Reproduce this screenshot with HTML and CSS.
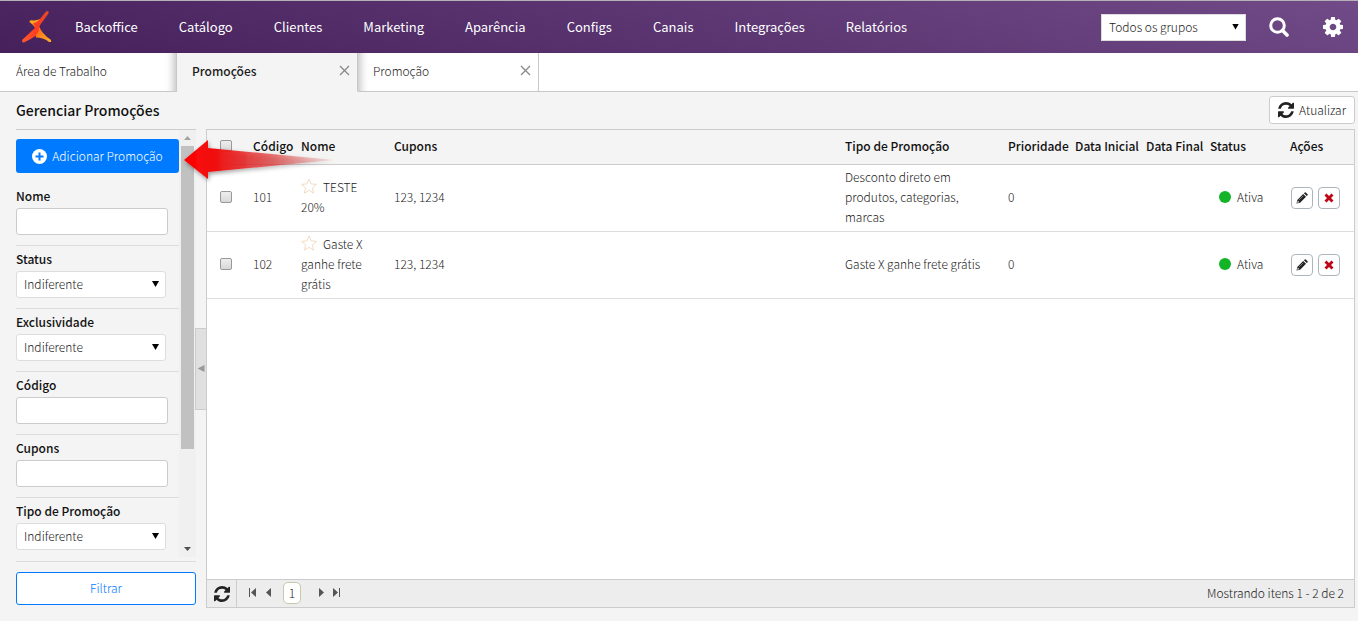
FILE: index.html
```html
<!DOCTYPE html>
<html lang="pt-br">
	<head>
		<meta charset="utf-8">
		<title>Gerenciar Promoções</title>
		<link rel="stylesheet" href="styles.css">
	</head>
	<body>
		<!-- icones reutilizados -->
		<svg class="sprite" width="0" height="0">
			<symbol id="refresh" viewBox="0 0 1536 1536">
				<path d="M1511 928q0 5-1 7-64 268-268 434.500T764 1536q-146 0-282.500-55T238 1324l-129 129q-19 19-45 19t-45-19-19-45V960q0-26 19-45t45-19h448q26 0 45 19t19 45-19 45l-137 137q71 66 161 102t187 36q134 0 250-65t186-179q11-17 53-117 8-23 30-23h192q13 0 22.500 9.500t9.500 22.500zM1536 128v448q0 26-19 45t-45 19h-448q-26 0-45-19t-19-45 19-45l138-138Q969 256 768 256q-134 0-250 65T332 500q-11 17-53 117-8 23-30 23H50q-13 0-22.500-9.500T18 608v-7q65-268 270-434.500T768 0q146 0 284 55.500T1297 212l130-129q19-19 45-19t45 19 19 45z"/>
			</symbol>
			<symbol id="star" viewBox="0 0 16 16">
				<path d="M8 1l2.100 4.900 5.300.500-4 3.500 1.200 5.200L8 12.400l-4.600 2.700 1.200-5.200-4-3.500 5.300-.500z" fill="#fff" stroke="#f0dcc4"/>
			</symbol>
			<symbol id="pencil" viewBox="0 0 12 12">
				<path d="M.500 11.500l.800-3.600L7.200 2l2.800 2.800-5.900 5.900zM7.900 1.300l.900-.900q.500-.400 1 0l1.800 1.800q.400.500 0 1l-.900.900z" fill="#222"/>
				<path d="M1.500 10.500l.400-1.600 1.200 1.200zM3.200 7.900l4-4" fill="#fff" stroke="#bbb" stroke-width=".6"/>
			</symbol>
			<symbol id="cross" viewBox="0 0 10 10">
				<path d="M2.500.500L5 3 7.500.500l2 2L7 5l2.500 2.500-2 2L5 7 2.500 9.500l-2-2L3 5 .500 2.500z" fill="#c00418"/>
			</symbol>
		</svg>

		<header class="topbar">
			<a class="logo" href="#" aria-label="Início">
				<svg width="32" height="34" viewBox="0 0 32 34">
					<defs>
						<linearGradient id="lg1" x1="0" y1="1" x2="1" y2="0">
							<stop offset="0" stop-color="#ff5a30"/>
							<stop offset=".5" stop-color="#ff3a20"/>
							<stop offset="1" stop-color="#e04a2a"/>
						</linearGradient>
						<linearGradient id="lg2" x1="0" y1="0" x2="1" y2="1">
							<stop offset="0" stop-color="#ff5a1c"/>
							<stop offset="1" stop-color="#ffb41e"/>
						</linearGradient>
					</defs>
					<path d="M8.500 12q-.500-2 2.500-1.700 4 .700 8-1.300l-1 8-3 2q-2-4-6.500-7z" fill="#ffa51e"/>
					<path d="M14 18l4-2q3 8 11.500 13.500 2 3-1.500 2.500-5-4.500-13-4.500z" fill="url(#lg2)"/>
					<path d="M25 1.500q3.500-1.500 2.500 2L18 16.500q0 6-3.500 9.500Q10 29 3 32.500q-3 0-1.500-3L14 18q0-2-2-4.500 4-1 6.500-4z" fill="url(#lg1)"/>
				</svg>
			</a>
			<nav class="menu">
				<a href="#">Backoffice</a>
				<a href="#">Catálogo</a>
				<a href="#">Clientes</a>
				<a href="#">Marketing</a>
				<a href="#">Aparência</a>
				<a href="#">Configs</a>
				<a href="#">Canais</a>
				<a href="#">Integrações</a>
				<a href="#">Relatórios</a>
			</nav>
			<div class="tools">
				<span class="select group">
					<select aria-label="Grupos"><option>Todos os grupos</option></select>
				</span>
				<button class="tool" type="button" aria-label="Buscar">
					<svg width="20" height="20" viewBox="0 0 20 20" fill="none" stroke="#fff">
						<circle cx="8.500" cy="8.500" r="6.800" stroke-width="3"/>
						<path d="M13.500 13.500l4.500 4.500" stroke-width="3.600" stroke-linecap="round"/>
					</svg>
				</button>
				<button class="tool" type="button" aria-label="Configurações">
					<svg width="20" height="20" viewBox="0 0 1536 1536" fill="#fff">
						<path d="M1024 768q0-106-75-181t-181-75-181 75-75 181 75 181 181 75 181-75 75-181zm512-109v222q0 12-8 23t-20 13l-185 28q-19 54-39 91 35 50 107 138 10 12 10 25t-9 23q-27 37-99 108t-94 71q-12 0-26-9l-138-108q-44 23-91 38-16 136-29 186-7 28-36 28H657q-14 0-24.500-8.500T621 1506l-28-184q-49-16-90-37l-141 107q-10 9-25 9-14 0-25-11-126-114-165-168-7-10-7-23 0-12 8-23 15-21 51-66.500t54-70.500q-27-50-41-99L29 913q-13-2-21-12.500T0 877V655q0-12 8-23t19-13l186-28q14-46 39-92-40-57-107-138-10-12-10-24 0-10 9-23 26-36 98.500-107.500T337 135q13 0 26 10l138 107q44-23 91-38 16-136 29-186 7-28 36-28h222q14 0 24.500 8.500T915 30l28 184q49 16 90 37l142-107q9-9 24-9 13 0 25 10 129 119 165 170 7 8 7 22 0 12-8 23-15 21-51 66.500t-54 70.500q26 50 41 98l183 28q13 2 21 12.500t8 23.500z"/>
					</svg>
				</button>
			</div>
		</header>

		<div class="tabs">
			<div class="tab before"><a href="#">Área de Trabalho</a></div>
			<div class="tab current">
				<a href="#">Promoções</a>
				<button class="close" type="button" aria-label="Fechar">
					<svg width="11" height="11" viewBox="0 0 11 11"><path d="M1 1l9 9M10 1l-9 9"/></svg>
				</button>
			</div>
			<div class="tab after">
				<a href="#">Promoção</a>
				<button class="close" type="button" aria-label="Fechar">
					<svg width="11" height="11" viewBox="0 0 11 11"><path d="M1 1l9 9M10 1l-9 9"/></svg>
				</button>
			</div>
			<div class="rest"></div>
		</div>

		<div class="heading">
			<h1>Gerenciar Promoções</h1>
			<button class="update" type="button">
				<svg width="16" height="16" fill="#222"><use href="#refresh"/></svg>
				Atualizar
			</button>
		</div>

		<main class="content">
			<aside class="sidebar">
				<div class="scroll">
					<form class="filters">
						<button class="add" type="button">
							<svg width="15" height="15" viewBox="0 0 15 15">
								<circle cx="7.500" cy="7.500" r="7.500" fill="#fff"/>
								<path d="M7.500 3.500v8M3.500 7.500h8" stroke="#007bff" stroke-width="2"/>
							</svg>
							Adicionar Promoção
						</button>
						<div class="field">
							<label for="nome">Nome</label>
							<input id="nome" type="text">
						</div>
						<div class="field">
							<label for="status">Status</label>
							<span class="select"><select id="status"><option>Indiferente</option></select></span>
						</div>
						<div class="field">
							<label for="exclusividade">Exclusividade</label>
							<span class="select"><select id="exclusividade"><option>Indiferente</option></select></span>
						</div>
						<div class="field">
							<label for="codigo">Código</label>
							<input id="codigo" type="text">
						</div>
						<div class="field">
							<label for="cupons">Cupons</label>
							<input id="cupons" type="text">
						</div>
						<div class="field">
							<label for="tipo">Tipo de Promoção</label>
							<span class="select"><select id="tipo"><option>Indiferente</option></select></span>
						</div>
					</form>
					<div class="scrollbar">
						<i class="up"></i>
						<i class="thumb"></i>
						<i class="down"></i>
					</div>
				</div>
				<div class="submit">
					<button class="filter" type="button">Filtrar</button>
				</div>
			</aside>

			<div class="splitter">
				<button type="button" aria-label="Recolher"><i></i></button>
			</div>

			<section class="grid">
				<table>
					<colgroup>
						<col class="c-check">
						<col class="c-code">
						<col class="c-name">
						<col>
						<col class="c-type">
						<col class="c-priority">
						<col class="c-start">
						<col class="c-end">
						<col class="c-status">
						<col class="c-actions">
					</colgroup>
					<thead>
						<tr>
							<th class="check"><input type="checkbox" aria-label="Selecionar todos"></th>
							<th>Código</th>
							<th>Nome</th>
							<th>Cupons</th>
							<th>Tipo de Promoção</th>
							<th>Prioridade</th>
							<th>Data Inicial</th>
							<th>Data Final</th>
							<th>Status</th>
							<th>Ações</th>
						</tr>
					</thead>
					<tbody>
						<tr>
							<td class="check"><input type="checkbox" aria-label="Selecionar 101"></td>
							<td>101</td>
							<td class="name"><svg class="star" width="16" height="16"><use href="#star"/></svg>TESTE 20%</td>
							<td>123, 1234</td>
							<td class="type">Desconto direto em produtos, categorias, marcas</td>
							<td>0</td>
							<td></td>
							<td></td>
							<td><span class="status">Ativa</span></td>
							<td>
								<div class="actions">
									<button type="button" aria-label="Editar"><svg width="12" height="12"><use href="#pencil"/></svg></button>
									<button type="button" aria-label="Excluir"><svg width="10" height="10"><use href="#cross"/></svg></button>
								</div>
							</td>
						</tr>
						<tr>
							<td class="check"><input type="checkbox" aria-label="Selecionar 102"></td>
							<td>102</td>
							<td class="name"><svg class="star" width="16" height="16"><use href="#star"/></svg>Gaste X ganhe frete grátis</td>
							<td>123, 1234</td>
							<td class="type">Gaste X ganhe frete grátis</td>
							<td>0</td>
							<td></td>
							<td></td>
							<td><span class="status">Ativa</span></td>
							<td>
								<div class="actions">
									<button type="button" aria-label="Editar"><svg width="12" height="12"><use href="#pencil"/></svg></button>
									<button type="button" aria-label="Excluir"><svg width="10" height="10"><use href="#cross"/></svg></button>
								</div>
							</td>
						</tr>
					</tbody>
				</table>
				<div class="pager">
					<button class="reload" type="button" aria-label="Recarregar">
						<svg width="16" height="16" fill="#222"><use href="#refresh"/></svg>
					</button>
					<div class="pages">
						<button type="button" aria-label="Primeira"><svg width="8" height="9" viewBox="0 0 8 9"><path d="M0 0h1v9H0zM7 0v9L2 4.500z"/></svg></button>
						<button type="button" aria-label="Anterior"><svg width="8" height="9" viewBox="0 0 8 9"><path d="M6 0v9L1 4.500z"/></svg></button>
						<span class="page">1</span>
						<button type="button" aria-label="Próxima"><svg width="8" height="9" viewBox="0 0 8 9"><path d="M2 0v9l5-4.500z"/></svg></button>
						<button type="button" aria-label="Última"><svg width="8" height="9" viewBox="0 0 8 9"><path d="M6 0h1v9H6zM0 0v9l5-4.500z"/></svg></button>
					</div>
					<span class="info">Mostrando itens 1 - 2 de 2</span>
				</div>
			</section>
		</main>

		<!-- seta apontando para o botao adicionar -->
		<svg class="pointer" width="160" height="48" viewBox="0 0 160 48">
			<defs>
				<linearGradient id="red" x1="0" x2="1" y1="0" y2="0">
					<stop offset="0" stop-color="#ff0000"/>
					<stop offset=".2" stop-color="#f01010"/>
					<stop offset=".6" stop-color="#e02828" stop-opacity=".6"/>
					<stop offset="1" stop-color="#d04040" stop-opacity=".1"/>
				</linearGradient>
				<filter id="shadow" x="-10%" y="-20%" width="120%" height="150%">
					<feDropShadow dx="1" dy="2" stdDeviation="2" flood-opacity=".4"/>
				</filter>
			</defs>
			<path d="M4 23L28 3v8l126 12L28 35v7z" fill="url(#red)" filter="url(#shadow)"/>
		</svg>
	</body>
</html>
```
FILE: styles.css
```css
* {
	margin: 0;
	padding: 0;
	box-sizing: border-box;
}

body {
	min-height: 100vh;
	display: flex;
	flex-direction: column;
	position: relative;
	background: #f4f4f4;
	color: #1c1c1c;
	font: 300 12px/20px "Noto Sans CJK JP", "Open Sans", sans-serif;
}

button,
input,
select {
	font: inherit;
	color: inherit;
}

button {
	border: 0;
	background: none;
	cursor: pointer;
}

a {
	color: inherit;
	text-decoration: none;
}

.sprite {
	position: absolute;
}

/* barra superior */
.topbar {
	height: 53px;
	display: flex;
	align-items: center;
	padding: 0 15px 0 21px;
	border-top: 1px solid #b5b0b8;
	background: linear-gradient(15deg, #45205b, #704b87);
	color: #fff;
}

.logo {
	width: 34px;
	height: 34px;
}

.menu {
	flex: 1;
	display: flex;
	padding-left: 20px;
	gap: 41px;
	font-size: 13px;
	font-weight: 400;
}

.tools {
	display: flex;
	align-items: center;
}

.tool {
	width: 20px;
	height: 20px;
	margin-left: 23px;
}

.tool + .tool {
	margin-left: 34px;
}

.tool svg {
	display: block;
}

/* selects */
.select {
	display: block;
	position: relative;
	width: 150px;
}

.select::after {
	content: "";
	position: absolute;
	top: 10px;
	right: 7px;
	width: 7px;
	height: 6px;
	background: #000;
	clip-path: polygon(0 0, 100% 0, 50% 100%);
	pointer-events: none;
}

.select select {
	display: block;
	width: 100%;
	height: 27px;
	padding: 0 7px 2px;
	appearance: none;
	border: 1px solid #ddd;
	border-radius: 3px;
	background: #fff;
	color: #1c1c1c;
}

.group {
	width: 145px;
}

.group select {
	padding-bottom: 0;
	border-radius: 0;
}

/* abas */
.tabs {
	display: flex;
	height: 39px;
	background: #fff;
}

.tab {
	display: flex;
	justify-content: space-between;
	width: 181px;
	padding: 8px 7px 0 15px;
	border-right: 1px solid #c8c8c8;
	border-bottom: 1px solid #c8c8c8;
}

.before {
	width: 177px;
	padding-left: 16px;
	box-shadow: inset -10px 0 8px -8px #bbb;
}

.current {
	border-bottom-color: #f4f4f4;
	background: #f4f4f4;
	font-weight: 500;
}

.after {
	box-shadow: inset 10px 0 8px -8px #bbb;
}

.rest {
	flex: 1;
	border-bottom: 1px solid #c8c8c8;
}

.close {
	height: 11px;
	margin-top: 4px;
}

.close svg {
	display: block;
	fill: none;
	stroke: #888;
	stroke-width: 1.3;
}

/* titulo */
.heading {
	display: flex;
	justify-content: space-between;
	height: 37px;
	padding: 4px 3px 0 16px;
}

.heading h1 {
	padding-top: 4px;
	font-size: 14px;
	line-height: 20px;
	font-weight: 500;
	color: #111;
}

.update {
	display: flex;
	align-items: center;
	gap: 5px;
	height: 28px;
	padding: 0 8px;
	border: 1px solid #ccc;
	border-radius: 3px;
	background: #fff;
}

/* conteudo */
.content {
	flex: 1;
	display: flex;
	padding: 0 3px 13px 16px;
}

.sidebar {
	width: 180px;
	display: flex;
	flex-direction: column;
	border-top: 1px solid #ccc;
}

.scroll {
	flex: 1;
	display: flex;
}

.filters {
	width: 163px;
}

.add {
	display: flex;
	align-items: center;
	justify-content: center;
	gap: 5px;
	width: 100%;
	height: 34px;
	margin: 9px 0;
	border-radius: 3px;
	background: #007bff;
	color: #fff;
}

.field {
	padding: 3px 0 10px;
	border-top: 1px solid #ddd;
}

.add + .field {
	border-top-color: transparent;
}

.field:last-child {
	padding-bottom: 0;
}

.field label {
	display: block;
	margin-bottom: 2px;
	font-weight: 500;
	color: #111;
}

.field input {
	display: block;
	width: 152px;
	height: 27px;
	padding: 0 7px;
	border: 1px solid #ccc;
	border-radius: 3px;
	background: #fff;
}

.scrollbar {
	flex: 1;
	display: flex;
	flex-direction: column;
	align-items: center;
	padding: 6px 0;
	background: #f0f0f0;
}

.up,
.down {
	width: 7px;
	height: 4px;
	background: #a3a3a3;
	clip-path: polygon(50% 0, 100% 100%, 0 100%);
}

.down {
	margin-top: auto;
	background: #505050;
	clip-path: polygon(0 0, 100% 0, 50% 100%);
}

.thumb {
	width: 13px;
	height: 73%;
	margin-top: 6px;
	background: #c1c1c1;
}

.submit {
	margin-top: 4px;
	padding: 10px 0 3px;
	border-top: 1px solid #ddd;
}

.filter {
	width: 100%;
	height: 33px;
	padding-bottom: 2px;
	border: 1px solid #007bff;
	border-radius: 3px;
	background: #fff;
	color: #007bff;
}

.splitter {
	width: 11px;
	margin-left: -1px;
	display: flex;
	align-items: center;
}

.splitter button {
	display: flex;
	align-items: center;
	justify-content: center;
	width: 100%;
	height: 82px;
	border: 1px solid #ccc;
	border-right: 0;
	background: #e0e0e0;
}

.splitter i {
	width: 7px;
	height: 7px;
	background: #999;
	clip-path: polygon(100% 0, 100% 100%, 0 50%);
}

/* tabela */
.grid {
	flex: 1;
	display: flex;
	flex-direction: column;
	border: 1px solid #ccc;
	background: #fff;
}

.grid table {
	width: 100%;
	table-layout: fixed;
	border-collapse: separate;
	border-spacing: 0;
}

.c-check { width: 43px; }
.c-code { width: 48px; }
.c-name { width: 93px; }
.c-type { width: 163px; }
.c-priority { width: 67px; }
.c-start { width: 71px; }
.c-end { width: 64px; }
.c-status { width: 80px; }
.c-actions { width: 67px; }

.grid th {
	height: 35px;
	padding: 0 0 2px 3px;
	border-bottom: 1px solid #ccc;
	background: #f4f4f4;
	color: #111;
	font-weight: 500;
	text-align: left;
	white-space: nowrap;
}

.grid td {
	height: 67px;
	padding: 2px 0 4px 3px;
	border-bottom: 1px solid #ddd;
}

.grid .name {
	padding-right: 20px;
}

.grid .type {
	padding-right: 20px;
}

.grid .check {
	padding-left: 13px;
}

.check input {
	display: block;
	width: 12px;
	height: 12px;
	appearance: none;
	border: 1px solid #999;
	border-radius: 2px;
	background: linear-gradient(#eee, #d8d8d8);
}

.star {
	margin-right: 6px;
	vertical-align: -2px;
}

.status {
	display: flex;
	align-items: center;
	gap: 6px;
	padding-left: 9px;
}

.status::before {
	content: "";
	width: 12px;
	height: 12px;
	border-radius: 50%;
	background: #14b428;
}

.actions {
	display: flex;
	gap: 5px;
	padding: 1px 0 0 1px;
}

.actions button {
	display: flex;
	align-items: center;
	justify-content: center;
	width: 22px;
	height: 22px;
	border: 1px solid #adb5bd;
	border-radius: 4px;
	background: #fff;
}

/* paginacao */
.pager {
	display: flex;
	align-items: center;
	height: 28px;
	margin-top: auto;
	padding-right: 10px;
	border-top: 1px solid #ccc;
	background: #ededed;
}

.reload {
	display: flex;
	align-items: center;
	justify-content: center;
	width: 30px;
	height: 27px;
	border-right: 1px solid #ccc;
}

.pages {
	flex: 1;
	display: flex;
	align-items: center;
	gap: 8px;
	padding: 0 0 2px 12px;
}

.pages button {
	width: 8px;
	height: 9px;
}

.pages svg {
	display: block;
	fill: #555;
}

.page {
	width: 18px;
	height: 22px;
	margin: 0 8px 0 2px;
	border: 1px solid #c5c8ad;
	border-radius: 5px;
	background: #fff;
	text-align: center;
}

.info {
	padding-bottom: 2px;
}

/* seta */
.pointer {
	position: absolute;
	top: 137px;
	left: 180px;
	pointer-events: none;
}
```
